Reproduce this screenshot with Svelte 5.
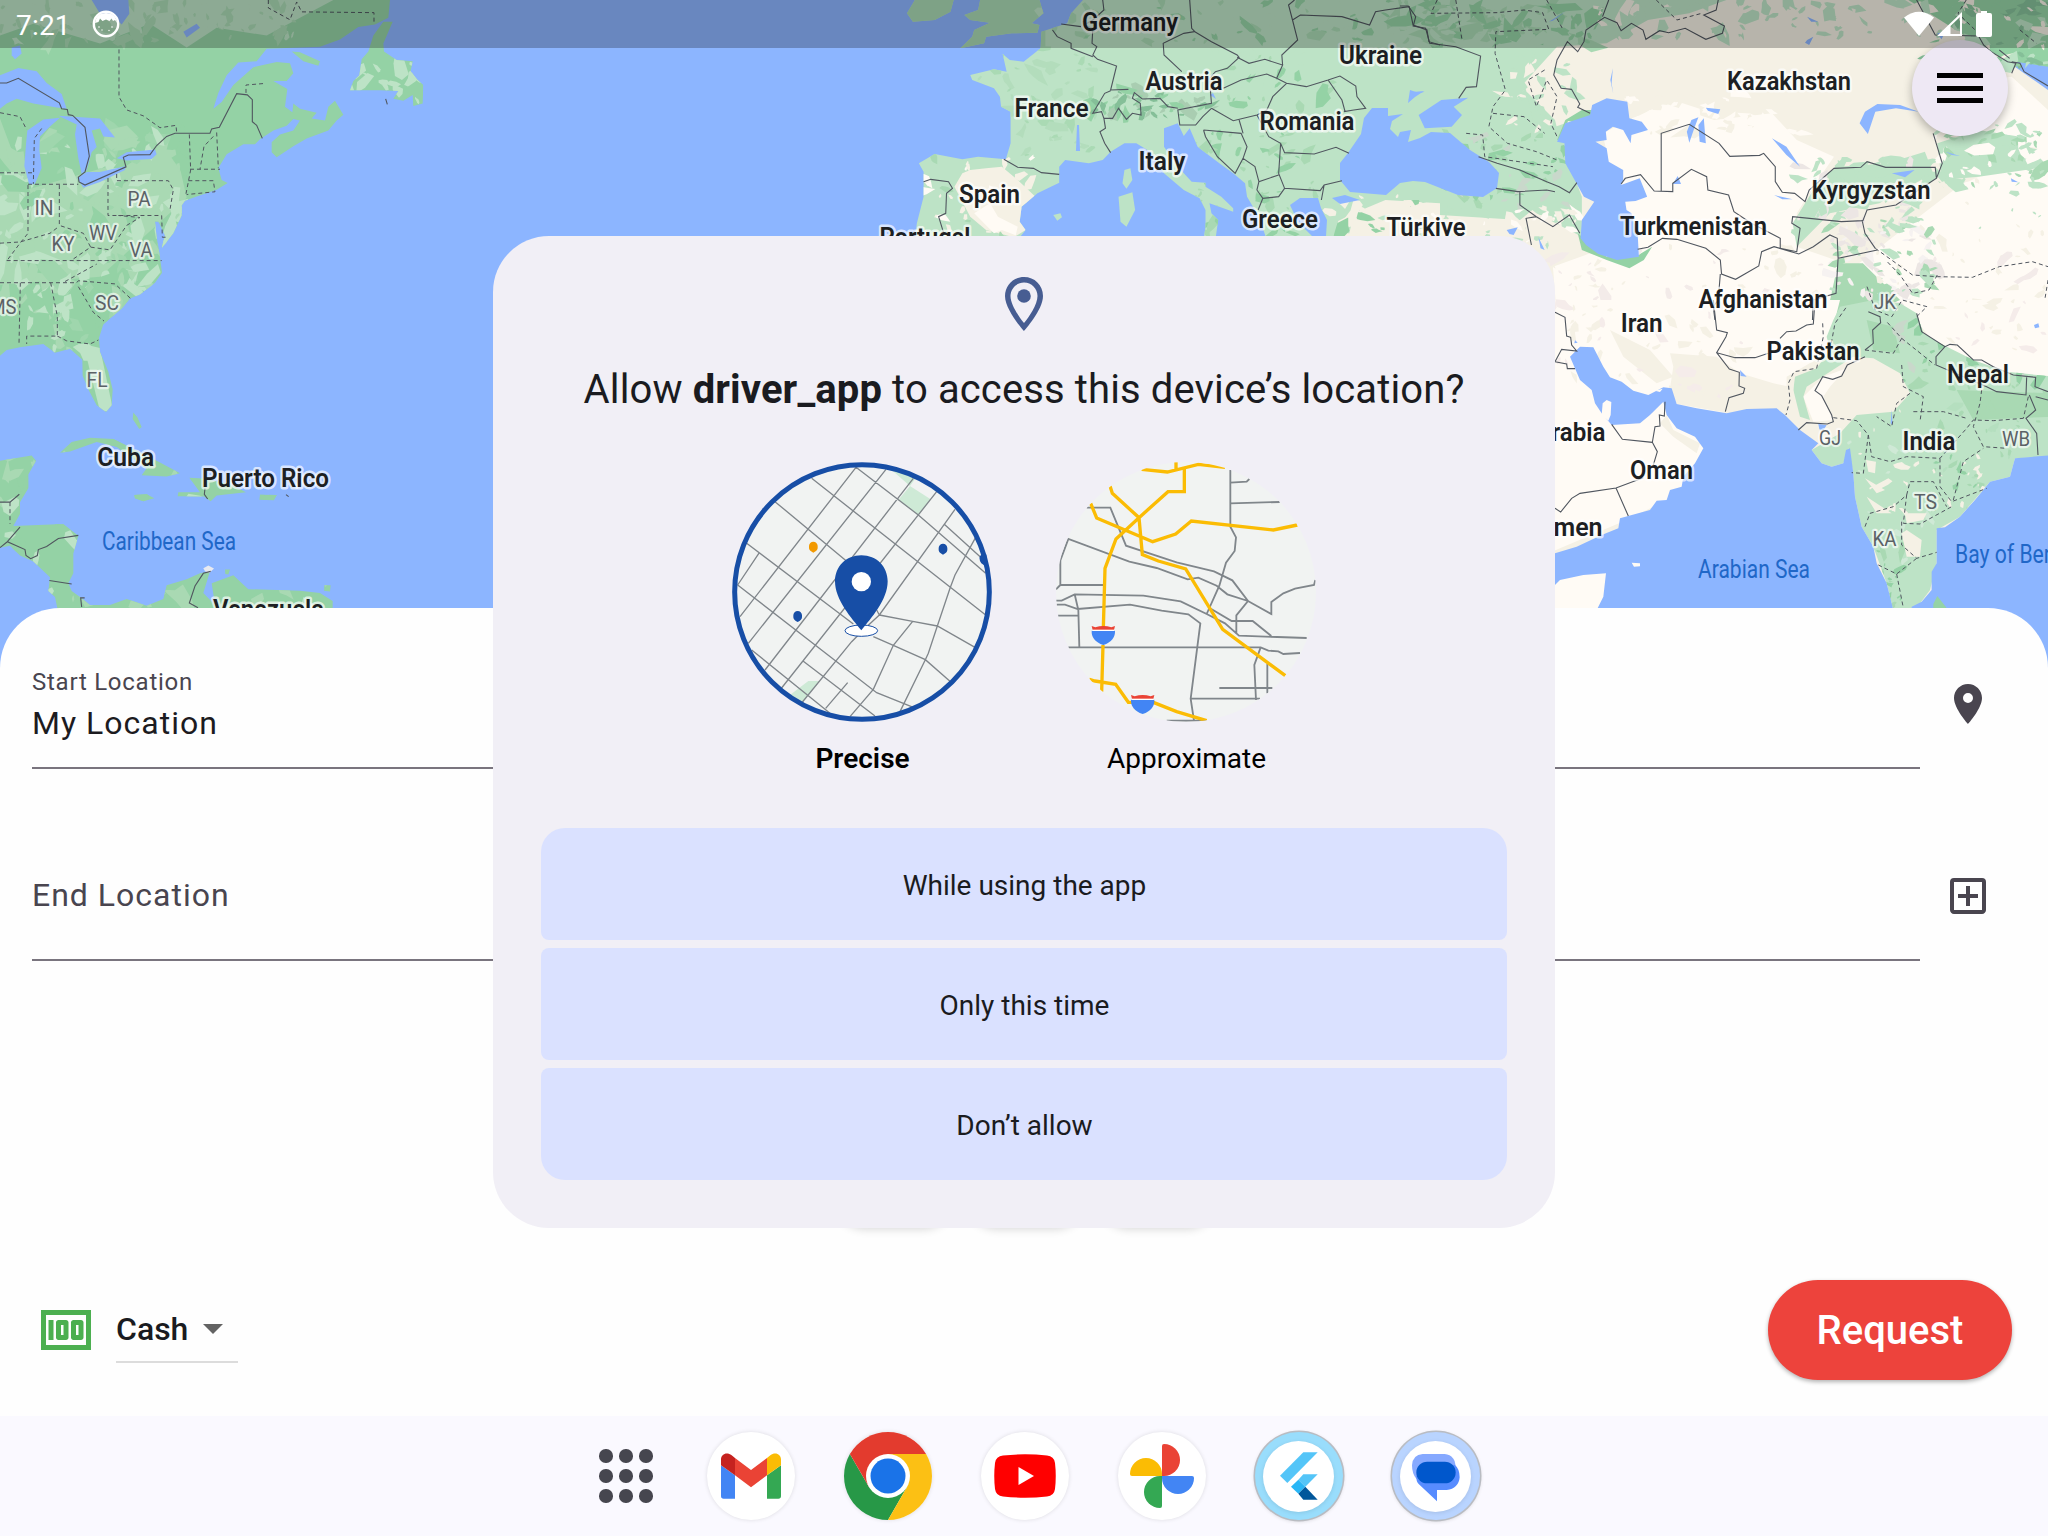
<script>
  // Deterministic terrain speckles, so the map looks the same on each load.
  function terrain(seed, x0, y0, x1, y1, count, size, colors) {
    let s = seed;
    const rnd = () => {
      s = (s * 16807) % 2147483647;
      return s / 2147483647;
    };
    const out = [];
    for (let i = 0; i < count; i++) {
      const cx = x0 + rnd() * (x1 - x0);
      const cy = y0 + rnd() * (y1 - y0);
      const r = size * (0.3 + rnd() * rnd() * 1.6);
      const tilt = rnd() * 3.14;
      const n = 5 + Math.floor(rnd() * 4);
      const pts = [];
      for (let k = 0; k < n; k++) {
        const a = (k / n) * 6.283;
        const q = r * (0.4 + rnd() * 0.8);
        const px = Math.cos(a) * q * 1.5;
        const py = Math.sin(a) * q * 0.7;
        pts.push(`${(cx + px * Math.cos(tilt) - py * Math.sin(tilt)).toFixed(1)},${(cy + px * Math.sin(tilt) + py * Math.cos(tilt)).toFixed(1)}`);
      }
      out.push({ points: pts.join(' '), fill: colors[Math.floor(rnd() * colors.length)] });
    }
    return out;
  }

  const americas = [
    '0,0 1170,0 1165,45 1125,62 1075,68 1020,100 960,118 800,123 770,155 715,158 680,190 655,235 640,275 665,258 700,215 760,170 830,157 870,160 880,185 860,205 820,205 862,225 855,270 890,292 860,318 820,330 780,352 765,365 730,365 680,390 655,425 665,455 683,463 650,480 590,497 555,508 545,520 545,545 520,590 485,628 495,595 475,560 465,560 470,600 480,650 486,690 465,715 420,745 390,755 365,780 310,820 297,855 300,890 325,940 338,985 335,1025 318,1042 290,1025 265,985 248,950 247,910 210,882 165,892 130,870 60,878 20,885 0,900',
    '1150,55 1178,55 1150,110 1152,130 1190,152 1238,155 1232,180 1250,200 1270,215 1268,262 1240,268 1238,240 1210,255 1180,250 1195,230 1140,228 1050,228 1060,205 1078,190 1085,150 1105,130 1120,90',
    '815,360 840,340 880,330 900,305 875,300 880,262 900,275 950,285 935,300 975,305 985,270 1005,255 1030,290 1010,305 985,330 920,350 880,370 830,398 815,385',
    '875,130 900,132 960,155 955,166 910,155',
    '0,1165 95,1152 108,1165 85,1200 85,1235 60,1270 60,1300 40,1330 190,1325 235,1355 220,1400 220,1450 205,1475 215,1495 240,1510 270,1530 330,1530 380,1515 440,1532 490,1515 500,1480 560,1465 600,1450 630,1445 610,1500 645,1530 635,1475 700,1455 745,1490 900,1494 960,1500 998,1520 998,1570 180,1570 165,1510 145,1495 150,1460 100,1420 60,1405 30,1380 0,1385',
    '180,1145 215,1118 270,1107 340,1110 410,1140 480,1170 540,1197 500,1205 425,1202 440,1185 350,1130 290,1118 210,1142',
    '568,1208 610,1210 690,1225 738,1245 650,1253 632,1268 612,1256 533,1255 535,1245 600,1245',
    '403,1252 440,1250 463,1260 430,1268 405,1260',
    '780,1251 830,1252 822,1265 778,1264',
    '400,1043 412,1055 425,1080 418,1085 398,1060',
    '974,1480 992,1480 990,1496 972,1494',
    '675,1440 690,1440 685,1453 676,1452'
  ];
  const lakes = [
    '0,190 55,172 110,180 140,210 185,238 200,275 170,272 100,262 50,250 20,262 0,275',
    '82,330 130,302 180,298 150,320 120,345 118,380 125,425 105,465 88,468 73,420 78,365',
    '175,293 300,300 345,348 310,345 300,325 275,330 290,372 275,385 260,430 245,440 235,400 225,340 230,315',
    '232,450 260,435 300,435 378,420 375,430 300,460 250,475',
    '350,400 380,385 465,378 470,390 455,402 380,406',
    '275,0 385,0 388,35 365,62 345,45 305,42',
    '35,120 60,115 65,135 45,150 35,140',
    '550,80 590,60 600,70 560,95'
  ];
  const americaBorders =
    'M0 210L20 210 55 198 178 260 185 275 202 277 205 290 218 292 255 322 268 395 255 435 235 448 237 460 255 468 378 422 370 398 385 392 450 391 470 368 500 345 525 337 630 337 635 326 658 322 710 237 742 240 757 252 757 308 770 317 787 350M0 1270H30L58 1250M22 1370L60 1333M0 1385L22 1370 75 1390 78 1405 92 1413 112 1405 115 1390 140 1382 175 1362 235 1354M148 1468L215 1477M245 1535L242 1512 254 1512M632 1445L610 1450 585 1482 568 1525 594 1537M615 1235L613 1250 623 1262';
  const americaStates =
    'M357 125V245L380 278 430 293 480 323 528 317 530 335M568 340L572 430 558 490M570 428H660M0 437H100M84 468V590L60 615 20 660M84 466H235M178 468V570L250 590 272 625 220 655M324 450V545H485M350 440V457H505L520 480 510 530M20 659H485M0 715H230L235 710 345 718 392 755M61 715L57 870M152 715L172 800V850H80V870M172 850L200 862 270 870 295 860M235 725L280 790 312 812M125 325L103 350 100 465M0 285L60 295 80 328M650 335L655 425M640 345L612 370 600 428M565 457H640L645 485 560 492M485 545L487 600H505M195 712L290 668M272 625L330 632 380 570 420 550 355 545M30 1270V1325M805 0V20L870 50 890 5 905 30 1122 32V58M738 235V215L795 211M0 615L60 612 150 590 178 572';

  const europe = [
    '665,0 635,40 625,70 560,95 558,145 515,185 480,180 462,162 472,215 440,208 380,225 385,240 440,265 455,290 458,320 482,335 482,430 470,478 400,470 360,478 290,462 250,490 262,515 262,590 245,670 240,720 500,720 520,690 505,665 510,620 550,580 605,548 605,500 620,480 680,490 715,480 735,455 770,430 800,430 835,455 870,520 920,570 960,595 975,630 975,680 970,720 1000,720 1007,660 990,640 985,610 1045,635 1045,625 1015,590 975,560 975,548 940,545 905,500 870,440 870,385 905,370 920,408 935,385 955,440 1010,490 1045,520 1075,550 1080,590 1110,650 1130,720 2000,720 2000,0',
    '220,40 240,0 338,0 330,35 290,60 235,65',
    '405,0 400,30 365,45 380,60 430,68 390,90 385,110 355,145 415,130 420,110 485,100 550,98 555,75 535,70 565,40 555,0',
    '770,510 785,505 790,540 775,566 765,550',
    '755,590 790,577 797,630 775,680 760,665',
    '590,645 608,640 612,652 600,662'
  ];
  const europeBorders =
    'M715 0L718 30 690 60 668 75 690 85 688 130 700 140 690 165 702 178 750 198 735 270 780 268M735 272L720 280 690 340 712 335 718 355 740 355 755 325 775 358 790 340 812 345 810 310 790 295 795 278 815 297 860 295 880 320 905 325M718 355L722 385 708 395 720 430 735 458M610 72L660 80M588 90L600 110 635 130 635 145 690 170M935 0L940 85 948 95 920 100 868 130 870 165 915 215M948 95L990 125 1055 165 1060 172 1030 205 1000 215 985 235 988 280 990 310 905 330 910 375 950 375 968 350 990 325M1055 172L1085 190 1125 178 1170 195 1155 235 1130 222 1065 240 1020 265M1170 195L1168 165 1208 120 1195 60 1185 15 1200 0M1195 60L1215 45 1320 50 1390 75 1405 35 1430 30 1490 20 1500 75 1535 90 1540 125 1568 135M1155 235L1180 250 1230 260 1285 240 1315 228 1355 258 1358 290 1380 325 1350 330 1325 335M1180 250L1145 290 1130 330 1105 345 1045 362 990 325M1285 240L1320 300 1328 335M970 390L1065 400 1080 440 1070 475 1050 520 1005 470 975 410 970 390M1060 360L1070 400M1105 345L1135 410 1165 430 1175 458 1250 462 1305 442 1338 460M1165 430L1160 520 1175 565 1265 572 1275 555 1320 542M1160 525L1110 545 1105 570 1120 595 1160 590 1175 565M1120 595L1108 630M1070 475L1100 500 1110 545M1275 555L1268 600M262 545L280 538 325 545 335 565 320 580 318 640 300 650 313 700M465 478L500 502 540 505 560 518 605 523';

  const caspian = '380,425 400,370 460,345 465,315 500,295 550,305 555,355 585,365 600,390 560,405 558,430 540,390 515,380 498,395 500,420 473,425 500,445 505,485 540,510 540,540 535,555 580,535 598,590 570,603 545,605 548,630 560,640 575,700 578,770 525,780 480,762 450,735 437,715 440,660 470,605 445,590 400,490 398,430';
  const asiaBorders =
    'M0 18H20L38 50 32 78 62 85 72 130 135 140 195 168 185 260 160 262 142 295M770 0L765 30 735 45 785 78 780 100 740 118 690 85 650 98 628 92 595 118 588 90 560 70 535 92 525 68 495 52 450 90 445 125 430 155 405 125 380 180 372 225 390 265 415 268 435 312 430 322 460 340M632 572V400L700 373 772 430 798 469 870 466 880 460 908 500 908 545 925 577 955 580 980 605 990 570 1050 505 1115 502 1130 485 1175 502 1295 502 1298 535 1200 615 1130 630 1120 662 1068 665 950 650 948 670 968 685 960 755 920 745 920 715 850 670 808 635 795 585 745 570 742 530 705 508 660 550V575L615 573 582 524 545 535 535 552M1250 0L1295 105 1400 108 1412 135 1430 155 1470 185 1490 190 1480 220M1480 185L1500 190 1510 215 1568 258M1450 150L1475 175M1290 400L1312 490 1298 535M575 748L600 742 635 715 670 718 740 745 775 780 778 822 812 838 868 798 875 755 905 740 965 762 1000 740 1040 705 1058 715 1060 775 1155 750M775 822L770 900 758 920 762 960M1060 775L1055 880 1000 900 998 960M190 470L235 490 290 510 355 545 385 560 410 578 428 548M232 565L285 575 355 570 375 575M290 575V615L330 650 370 680 410 645 435 700M330 650L305 655 318 735M1118 660L1125 700 1150 745M505 0L490 50';
  const asiaDashed =
    'M90 0L75 40 235 38 300 30 345 38 360 88 232 95 230 160 255 270 225 320 215 380 260 430 330 455 380 480M350 210L310 240 330 320 355 240 380 290 365 370 380 410M225 340L300 350 350 400M160 400L200 405 205 470 260 480 370 500M355 0L395 90M620 0L670 60 730 40M135 0L150 120M1150 745L1240 825 1300 830 1385 832 1450 800 1530 785 1568 800M1300 825L1280 870 1240 880 1210 825 1175 780M1130 860L1150 930 1190 950 1215 900 1275 920 1250 950M1568 840L1560 900M1370 0L1350 40 1400 100M1500 90L1540 130';

  const arabian = '90,170 120,140 160,142 190,200 210,232 245,245 280,272 325,285 370,262 395,265 410,312 470,325 560,340 620,327 710,325 735,345 780,390 835,430 815,450 845,490 875,500 910,490 918,450 930,445 940,520 945,590 965,680 1000,740 1010,790 1040,850 1065,950 160,950 190,890 198,820 130,825 60,840 45,855 30,855 30,765 45,760 110,740 185,705 235,685 240,655 330,630 350,602 380,600 390,570 425,560 430,530 465,490 490,445 465,410 410,385 380,345 370,305 330,345 300,370 215,375 185,340 165,310 155,270 120,240';
  const bengal = '1540,465 1425,475 1418,500 1410,530 1350,545 1305,600 1260,650 1215,682 1190,685 1190,790 1175,815 1175,870 1145,905 1115,920 1115,1140 1540,1140';
  const india = '900,20 1000,0 1080,10 1130,40 1150,100 1200,130 1300,180 1400,215 1540,230 1540,470 1425,475 1410,530 1350,545 1260,650 1190,690 1190,790 1170,870 1110,950 1065,950 1040,850 1000,740 965,680 945,590 940,520 925,445 910,490 875,500 845,490 815,450 850,430 900,400 950,345 1060,335 1110,280 1080,220 1000,175 940,170 870,215 800,260 790,290 810,360 780,350 760,270 765,230 830,205 870,150 860,110 880,60';
  const southBorders =
    'M45 37L75 52 80 108 92 112 95 135 110 153 65 148 45 185M45 185L80 192 82 206H105M520 0L530 90 562 98 558 110 530 158 585 173 645 173 685 160M530 158L568 207 598 217 597 258 614 265 610 280 567 293 556 335M720 115L740 95 768 93 800 75 820 72 825 0M215 373L247 418 337 427 352 455 340 495M337 427L345 380 360 378 358 345 373 348 375 305M45 625L62 636 95 595 120 580 228 564 310 533M228 564L265 648M775 390L800 368 862 372 880 365 875 345 845 287 825 272 848 230 878 238 905 228 922 195 975 170M975 150L1000 130 998 90 1022 68 1020 50 985 35M1130 40L1145 95 1215 140 1230 133 1252 135 1300 180 1325 180 1360 200 1420 225 1487 232 1485 260 1524 275M1215 140L1188 170V195L1340 260 1370 275 1458 285 1460 232M1468 285L1487 330 1458 355 1490 400 1494 465M1487 290L1524 300';
  const southDashed =
    'M848 70L850 110 830 205 762 215 745 250 750 300 738 345M870 150L885 70 920 20M975 150L1060 160 1085 115 1040 65M1085 115L1185 195M1085 195L1090 260 1150 290 1140 365M880 353L950 362 985 405 995 470 1050 485 1100 470 1200 475 1280 385 1300 360 1360 362 1450 355M985 405L970 520 935 518M1110 280L1070 310 1055 380 1010 350M1120 335L1210 335 1280 355M1325 270L1320 310 1300 380 1330 440 1400 445M1200 475V560L1235 605 1340 565M1240 600L1270 485 1330 445M1100 585L1110 545 1180 545 1220 620M975 680L990 640 1060 620 1100 585 1090 670 1140 672 1235 620M1085 665V735L1130 775 1190 757M1130 775L1070 822 1015 795M1070 822L1090 924M1465 290L1450 355';

  const countries = [
    ['Germany', 1130, 30.5, 96], ['Ukraine', 1380.5, 64, 83], ['Austria', 1184, 90, 77], ['France', 1051.5, 117, 74],
    ['Romania', 1307, 130, 95], ['Italy', 1162, 170, 47], ['Spain', 989.5, 203, 61], ['Greece', 1280, 228, 76],
    ['Portugal', 925, 246, 91], ['Türkiye', 1426, 236, 79], ['Kazakhstan', 1789, 90, 124], ['Kyrgyzstan', 1871, 199, 119],
    ['Turkmenistan', 1693.5, 235, 147], ['Afghanistan', 1763, 308, 129], ['Iran', 1641.7, 332, 42],
    ['Pakistan', 1813, 360, 93], ['Nepal', 1978, 383, 62], ['India', 1929, 450, 53], ['Oman', 1661.5, 479, 63],
    ['Saudi Arabia', 1537, 441, 137], ['Yemen', 1564, 536, 77], ['Cuba', 125.7, 466, 57],
    ['Puerto Rico', 265.5, 486.5, 127], ['Venezuela', 268.5, 618, 111]
  ];
  const states = [
    ['IN', 44, 215, 19], ['PA', 139, 206, 23], ['WV', 103, 240, 28], ['KY', 63, 251, 23], ['VA', 141, 257, 23],
    ['SC', 107, 309.5, 24], ['FL', 97, 386.5, 21], ['MS', 3, 314, 27], ['JK', 1885, 309, 22], ['GJ', 1830, 445, 22],
    ['WB', 2016, 446, 28], ['TS', 1925.5, 509, 23], ['KA', 1884.5, 546, 24]
  ];
  const seas = [
    ['Caribbean Sea', 169, 550, 134], ['Arabian Sea', 1754, 577.5, 112], ['Bay of Bengal', 2019.5, 562.5, 129]
  ];

  const greens = ['#bde3c6', '#bde3c6', '#a9d9b3', '#a9d9b3', '#94d2a5', '#9fd6ad'];
  const naPatches = [
    ...terrain(11, 0, 340, 560, 900, 260, 28, greens),
    ...terrain(5, 0, 0, 900, 110, 80, 20, ['#bde3c6', '#a9d9b3', '#a9d9b3']),
    ...terrain(6, 1050, 150, 1270, 265, 22, 20, ['#bde3c6']),
    ...terrain(7, 0, 1100, 1000, 1538, 120, 24, ['#a9d9b3', '#a9d9b3', '#bde3c6', '#94d2a5'])
  ];
  const euPatches = [
    ...terrain(21, 380, 140, 700, 470, 60, 18, ['#aadab4', '#b3ddbc']),
    ...terrain(22, 680, 270, 1000, 350, 55, 18, ['#94d2a5', '#a9cdb1', '#85bf98']),
    ...terrain(23, 1000, 150, 1300, 330, 30, 20, ['#94d2a5', '#a9d9b3', '#bde3c6']),
    ...terrain(24, 950, 380, 1260, 700, 60, 16, ['#94d2a5', '#a9d9b3']),
    ...terrain(25, 560, 0, 1568, 130, 70, 18, ['#94d2a5', '#a9d9b3', '#bde3c6']),
    ...terrain(26, 260, 470, 560, 720, 35, 16, ['#a9d9b3', '#f5f1e5', '#fffbf5']),
    ...terrain(27, 1270, 580, 1568, 720, 30, 18, ['#94d2a5', '#bde3c6', '#f5f1e5'])
  ];
  const asPatches = [
    ...terrain(31, 0, 0, 480, 130, 110, 24, ['#94d2a5', '#a9d9b3', '#bde3c6']),
    ...terrain(32, 480, 0, 1250, 110, 70, 20, ['#bde3c6', '#f5f1e5', '#bde3c6']),
    ...terrain(33, 1250, 0, 1568, 200, 80, 22, ['#94d2a5', '#85bf98', '#bde3c6', '#f5f1e5']),
    ...terrain(34, 250, 160, 420, 420, 35, 20, ['#f5f1e5', '#bde3c6', '#f5f1e5']),
    ...terrain(35, 100, 400, 420, 620, 60, 18, ['#94d2a5', '#a9d9b3', '#c9d8cb']),
    ...terrain(36, 520, 280, 1000, 400, 60, 18, ['#fffbf5', '#f5f1e5']),
    ...terrain(37, 1280, 370, 1568, 560, 80, 18, ['#bde3c6', '#a9d9b3', '#bde3c6', '#fffbf5']),
    ...terrain(38, 960, 480, 1290, 700, 60, 18, ['#bde3c6', '#bde3c6', '#ece6e4']),
    ...terrain(39, 1040, 640, 1300, 960, 110, 18, ['#bde3c6', '#a9d9b3', '#ece6e4', '#f6f2f1']),
    ...terrain(40, 370, 740, 1568, 960, 80, 15, ['#f5f1e5', '#f5f1e5', '#f3ebe9']),
    ...terrain(41, 0, 620, 430, 740, 60, 16, ['#f5f1e5', '#fffbf5', '#bde3c6']),
    ...terrain(42, 1250, 540, 1568, 760, 18, 12, ['#f5f1e5', '#bde3c6'])
  ];
  const indiaPatches = [
    ...terrain(51, 900, 330, 1180, 800, 36, 15, ['#f5f1e5', '#cfe9d6']),
    ...terrain(52, 1180, 250, 1540, 700, 50, 15, ['#a9d9b3', '#b5dfbf', '#a9d9b3']),
    ...terrain(53, 1180, 460, 1340, 620, 22, 12, ['#94d2a5', '#f5f1e5']),
    ...terrain(54, 1080, 60, 1540, 270, 40, 18, ['#94d2a5', '#a9d9b3', '#c9d8cb']),
    ...terrain(55, 990, 740, 1090, 930, 22, 14, ['#94d2a5', '#a9d9b3'])
  ];
  const iranPatches = [
    ...terrain(61, 45, 10, 620, 300, 60, 18, ['#f5f1e5', '#f5f1e5', '#f5ecea']),
    ...terrain(62, 1200, 0, 1540, 150, 22, 14, ['#f5f1e5', '#f5ecea'])
  ];

  const choices = ['While using the app', 'Only this time', 'Don’t allow'];
  const dots = [0, 1, 2, 3, 4, 5, 6, 7, 8];
</script>

<div class="screen">
  <svg class="map" viewBox="0 0 2048 680" width="2048" height="680">
    <defs>
      <clipPath id="na">{#each americas as p}<polygon points={p} />{/each}</clipPath>
      <clipPath id="eu">{#each europe as p}<polygon points={p} />{/each}</clipPath>
      <clipPath id="ind"><polygon points={india} /></clipPath>
    </defs>
    <rect width="2048" height="680" fill="#8cb5ff" />

    <g transform="scale(.33333 .3954)">
      <g clip-path="url(#na)">
        <rect width="1300" height="1600" fill="#94d2a5" />
        <path d="M0 0H1000L800 90 650 70 560 120 450 60 300 110 100 60 0 90Z" fill="#bde3c6" />
        <path d="M0 300L80 480 330 420 520 350 560 500 300 700 0 720Z" fill="#a9d9b3" />
        <path d="M250 870L300 880 340 1040 300 1040Z" fill="#bde3c6" />
        {#each naPatches as p}<polygon points={p.points} fill={p.fill} />{/each}
      </g>
      {#each lakes as p}<polygon points={p} fill="#8cb5ff" />{/each}
      <path d="M610 1437L625 1430 642 1438 628 1449 615 1445Z" fill="#e9eaf0" />
      <path class="border" d={americaBorders} />
      <path class="border dashed" d={americaStates} />
      <path class="border" d="M1157 250L1162 264M858 1251L866 1256" />
    </g>

    <g transform="translate(820 0) scale(.3954 .33333)">
      <g clip-path="url(#eu)">
        <rect width="2000" height="720" fill="#bde3c6" />
        <path d="M210 0H570V150H210Z" fill="#a9d9b3" />
        <path d="M380 510L420 505 460 500 500 540 545 590 510 620 520 690 490 712 420 690 380 650 340 560 360 520Z" fill="#f5f1e5" />
        <path d="M390 640L430 610 450 650 500 680 495 706 460 690 440 700Z" fill="#fffbf5" />
        <path d="M1350 640L1430 600 1568 610V720H1335Z" fill="#f5f1e5" />
        {#each euPatches as p}<polygon points={p.points} fill={p.fill} />{/each}
      </g>
    </g>

    <path d="M1500 48L1600 0H1920L2048 90V620H1440V215L1520 220 1570 180 1555 120 1525 90 1515 60Z" fill="#f5f1e5" />
    <g transform="translate(1400 0) scale(.4133 .33333)">
      <path d="M490 400L640 310 760 360 900 340 960 420 1050 470 1000 560 960 640 960 740 1100 800 1350 560 1568 430V960H380L370 800 460 760 560 800Z" fill="#fffbf5" />
      <path d="M1280 260L1480 230 1568 330V450L1330 400Z" fill="#fffbf5" />
      <path d="M0 0H790L700 40 600 60 500 130 380 140 300 250 330 400 400 370 450 340 400 460 440 590 440 710 330 640 290 600 170 600 0 600Z" fill="#bde3c6" />
      <path d="M380 420L400 360 440 330 470 330 430 400ZM430 700L500 770 570 770 610 740 590 780 555 805 500 780 440 750Z" fill="#94d2a5" />
      <path d="M1020 530L1060 500 1180 490 1270 455 1290 520 1160 610 1040 640 960 740 950 670ZM1300 430L1400 390 1500 410 1568 500 1400 530 1310 540Z" fill="#bde3c6" />
      <path d="M1060 790L1120 790 1210 900 1100 960H1030Z" fill="#a9d9b3" />
      <path d="M1230 0H1568V200L1460 180Z" fill="#94d2a5" />
      {#each asPatches as p}<polygon points={p.points} fill={p.fill} />{/each}
      <polygon points={caspian} fill="#8cb5ff" />
      <g fill="#8cb5ff">
        <path d="M45 345L100 300 165 293 130 320 150 345 125 380 60 385Z" />
        <path d="M694 395L705 360 722 352 712 385 700 428ZM722 375L735 355 740 430 725 425Z" />
        <path d="M1112 370L1125 335 1155 312 1210 315 1255 335 1200 325 1150 335 1132 402Z" />
        <path d="M740 323L775 328 770 342 745 332ZM900 415L935 440 968 500 935 465ZM1190 520L1245 510 1222 532ZM1320 455L1355 468 1335 465ZM985 120L1000 110 990 135 980 128ZM985 50L1012 65 995 65ZM1300 100L1320 95 1310 118ZM660 552L672 528 680 552ZM905 585L950 598 925 598ZM1478 535L1496 547 1480 545ZM515 205L512 250 516 282 509 240ZM258 690L285 682 275 705 265 702ZM335 712L350 750 340 745ZM20 300L35 275 60 275 40 282ZM360 65L400 35 370 62Z" />
      </g>
    </g>

    <g transform="translate(1540 300) scale(.33333)">
      <path d="M0 0H900L860 160 740 230 740 330 500 340 0 320Z" fill="#fffbf5" />
      <path d="M1080 0H1540V300L1400 240 1200 150Z" fill="#fffbf5" />
      <path d="M0 320H400L500 450 460 560 260 660 0 770V950H210L200 800 0 850Z" fill="#fffbf5" />
      <path d="M390 160L530 170 600 220 700 250 750 260 740 340 560 338 410 312 390 265 400 200ZM210 90L330 150 400 230 350 250 250 170Z" fill="#f5f1e5" />
      <path d="M380 345L400 390 480 430 470 460 400 410 360 370Z" fill="#f5f1e5" />
      <path d="M760 250H1110V340L880 420 740 350Z" fill="#f5f1e5" />
      {#each iranPatches as p}<polygon points={p.points} fill={p.fill} />{/each}
      <path d="M790 290L850 230 920 205 870 260 850 290 880 360 820 365Z" fill="#fffbf5" />
      <g clip-path="url(#ind)">
        <rect x="740" width="800" height="960" fill="#bde3c6" />
        <path d="M980 60L1060 80 1080 160 1000 150ZM1250 270L1540 280V350L1300 360Z" fill="#a9d9b3" />
        {#each indiaPatches as p}<polygon points={p.points} fill={p.fill} />{/each}
        <path d="M978 480L1008 485 1005 520 985 515ZM975 535L1035 570 1010 580ZM980 590L1055 640 1010 640ZM1095 640L1160 640 1150 660 1100 670ZM1100 690L1145 720 1140 770 1100 770 1085 700Z" fill="#f5f1e5" />
      </g>
      <polygon points={arabian} fill="#8cb5ff" />
      <polygon points={bengal} fill="#8cb5ff" />
      <path d="M835 372L860 375 850 392 838 388ZM600 210L620 230 602 228ZM1482 75L1495 70 1498 82 1485 85ZM105 120L113 128 103 130ZM1055 330L1058 375 1052 370Z" fill="#8cb5ff" />
      <path d="M188 310L200 300 214 306 212 345 205 362 185 345ZM275 788L300 790 300 799 282 800ZM345 272L368 266 360 276Z" fill="#fffbf5" />
      <path d="M1192 888L1220 924V950H1180V912Z" fill="#94d2a5" />
    </g>
    <path d="M1348 153L1340 163 1340 180 1350 192 1386 195 1400 183 1413 181 1425 182 1458 195 1483 197 1497 188 1499 173 1489 162 1470 150 1450 133 1431 132 1420 138 1408 142 1411 130 1400 132 1398 137 1390 129 1392 121 1403 114 1388 116 1388 108 1372 108 1364 118 1361 134Z" fill="#8cb5ff" />
    <path d="M1290 205L1300 198 1318 198 1321 208 1327 220 1326 236H1312L1298 222ZM1332 198L1345 195 1360 200 1340 204ZM1410 90L1416 92 1424 91 1415 97 1408 103ZM1210 95L1213 93 1216 99Z" fill="#8cb5ff" />
    <path d="M1078 125L1079 150 1077 150Z" stroke="#8cb5ff" stroke-width="2" />
    <g transform="translate(820 0) scale(.3954 .33333)"><path class="border" d={europeBorders} /></g>
    <g transform="translate(1400 0) scale(.4133 .33333)">
      <path class="border" d={asiaBorders} />
      <path class="border dashed" d={asiaDashed} />
    </g>
    <g transform="translate(1540 300) scale(.33333)">
      <path class="border" d={southBorders} />
      <path class="border dashed" d={southDashed} />
    </g>

    {#each states as [name, x, y, w]}<text class="state" {x} {y} textLength={w} lengthAdjust="spacingAndGlyphs">{name}</text>{/each}
    {#each seas as [name, x, y, w]}<text class="sea" {x} {y} textLength={w} lengthAdjust="spacingAndGlyphs">{name}</text>{/each}
    {#each countries as [name, x, y, w]}<text class="country" {x} {y} textLength={w} lengthAdjust="spacingAndGlyphs">{name}</text>{/each}
  </svg>

  <button class="menu" aria-label="Menu"><i></i><i></i><i></i></button>

  <header class="status">
    <div class="left">
      <span>7:21</span>
      <svg width="28" height="28" viewBox="0 0 28 28">
        <circle cx="14" cy="14" r="12.2" fill="none" stroke="#fff" stroke-width="2.4" />
        <path d="M3 13C4 6 8 3 14 3S24 6 25 13L23 10 21 11 19.500 8.500 17.500 11 14 9.500 10.500 11 8 8.500 6.500 12Z" fill="#fff" />
        <g fill="#fff"><circle cx="7" cy="17" r=".8" /><circle cx="20" cy="17" r=".8" /><circle cx="10" cy="20" r=".7" /><circle cx="17" cy="20.500" r=".7" /></g>
      </svg>
    </div>
    <svg width="90" height="28" viewBox="0 0 90 28" fill="#fff">
      <path d="M0 7.500Q15-4 30 7.500L15 26Z" />
      <path fill-rule="evenodd" d="M33 26L58 2V26ZM46.500 24H56V7L46.500 16Z" />
      <path d="M77 1H83V3H86Q88 3 88 5V25Q88 27 86 27H74Q72 27 72 25V5Q72 3 74 3H77Z" />
    </svg>
  </header>

  <main class="sheet">
    <div class="field">
      <div class="input filled"><small>Start Location</small><span>My Location</span></div>
      <svg width="48" height="48" viewBox="0 0 24 24" fill="#49454f">
        <path d="M12 2C8.130 2 5 5.130 5 9c0 5.250 7 13 7 13s7-7.750 7-13c0-3.870-3.130-7-7-7zm0 9.500a2.500 2.500 0 0 1 0-5 2.500 2.500 0 0 1 0 5z" />
      </svg>
    </div>
    <div class="field second">
      <div class="input"><label>End Location</label></div>
      <svg width="48" height="48" viewBox="0 0 24 24" fill="#49454f">
        <path d="M19 3H5a2 2 0 0 0-2 2v14c0 1.100.9 2 2 2h14c1.100 0 2-.9 2-2V5a2 2 0 0 0-2-2zm0 16H5V5h14v14zm-8-2h2v-4h4v-2h-4V7h-2v4H7v2h4v4z" />
      </svg>
    </div>
    <div class="chips"><i></i><i></i><i></i></div>
    <div class="actions">
      <svg width="60" height="60" viewBox="0 0 24 24" fill="#4caf50">
        <path d="M5 8h2v8H5zm7 0H9c-.55 0-1 .45-1 1v6c0 .55.45 1 1 1h3c.55 0 1-.45 1-1V9c0-.55-.45-1-1-1zm-1 6h-1v-4h1v4zm7-6h-3c-.55 0-1 .45-1 1v6c0 .55.45 1 1 1h3c.55 0 1-.45 1-1V9c0-.55-.45-1-1-1zm-1 6h-1v-4h1v4z" />
        <path d="M2 4v16h20V4H2zm2 14V6h16v12H4z" />
      </svg>
      <div class="select">
        <span>Cash</span>
        <svg width="20" height="10" viewBox="0 0 20 10"><path d="M0 0H20L10 10Z" fill="#636363" /></svg>
      </div>
      <button class="request">Request</button>
    </div>
  </main>

  <nav class="taskbar">
    <div class="apps">{#each dots as d (d)}<i></i>{/each}</div>
    <div class="app">
      <svg width="60" height="46" viewBox="0 0 180 136">
        <path d="M0 36V128Q0 136 8 136H42V66Z" fill="#4285f4" />
        <path d="M180 36V128Q180 136 172 136H138V66Z" fill="#34a853" />
        <path d="M42 66V14L90 50 138 14V66L90 102Z" fill="#ea4335" />
        <path d="M0 36V18C0 2 18-6 32 6L42 14V66Z" fill="#c5221f" />
        <path d="M180 36V18C180 2 162-6 148 6L138 14V66Z" fill="#fbbc04" />
      </svg>
    </div>
    <div class="app">
      <svg width="88" height="88" viewBox="-44 -44 88 88">
        <path d="M0 0L-38.100-22A44 44 0 0 1 38.100-22Z" fill="#e33b2e" />
        <path d="M-38.100-22A44 44 0 0 0 0 44L19 11 0 0-19 11Z" fill="#279847" />
        <path d="M38.100-22A44 44 0 0 1 0 44L19 11 0-22Z" fill="#fcc014" />
        <path d="M-38.100-22L-19 11 0 0V-22Z" fill="#e33b2e" />
        <circle r="22" fill="#fff" /><circle r="17.500" fill="#1a73e8" />
      </svg>
    </div>
    <div class="app">
      <svg width="62" height="44" viewBox="0 0 62 44">
        <path d="M9 1.500Q31-1 53 1.500Q60 2 61 9Q62.500 22 61 35Q60 42 53 42.500Q31 45 9 42.500Q2 42 1 35Q-.5 22 1 9Q2 2 9 1.500Z" fill="red" />
        <path d="M24.500 13L40 22 24.500 31Z" fill="#fff" />
      </svg>
    </div>
    <div class="app">
      <svg width="64" height="64" viewBox="-32 -32 64 64">
        <path d="M0 0V-30Q0-32 2-32A16 16 0 0 1 2 0Z" fill="#ea4335" />
        <path d="M0 0H30Q32 0 32 2A16 16 0 0 1 0 2Z" fill="#4285f4" />
        <path d="M0 0V30Q0 32-2 32A16 16 0 0 1-2 0Z" fill="#34a853" />
        <path d="M0 0H-30Q-32 0-32-2A16 16 0 0 1 0-2Z" fill="#fbbc04" />
      </svg>
    </div>
    <div class="app ringed flutter">
      <div>
        <svg width="38" height="48" viewBox="0 0 114 142">
          <path d="M70 0H113L22 92 0 70Z" fill="#54c5f8" />
          <path d="M70 66H113L76 103 55 82Z" fill="#54c5f8" />
          <path d="M33 103L55 82 76 103 55 124Z" fill="#29b6f6" />
          <path d="M55 124L76 103 113 142H70Z" fill="#01579b" />
        </svg>
      </div>
    </div>
    <div class="app ringed messages">
      <div>
        <svg width="48" height="48" viewBox="0 0 144 144">
          <path d="M32 0H98Q131 4 131 42L75 80 14 76Q0 60 0 34Q2 2 32 0Z" fill="#86a9ff" />
          <path d="M128 32Q143 44 143 70Q140 104 104 108H75V142L20 90Q12 82 13 66Z" fill="#578cff" />
          <rect x="13" y="23" width="118" height="65" rx="32.500" fill="#0057cc" />
        </svg>
      </div>
    </div>
  </nav>

  <section class="dialog">
    <svg class="pin" width="38" height="54" viewBox="0 0 38 54">
      <path fill-rule="evenodd" d="M19 0C8.500 0 0 8 0 19C0 33 19 54 19 54S38 33 38 19C38 8 29.500 0 19 0ZM19 5.500C26.500 5.500 32.500 11.500 32.500 19C32.500 27.500 24 40 19 46C14 40 5.500 27.500 5.500 19C5.500 11.500 11.500 5.500 19 5.500Z" fill="#475d92" />
      <circle cx="19" cy="19" r="6.800" fill="#475d92" />
    </svg>
    <h1>Allow <b>driver_app</b> to access this device’s location?</h1>
    <div class="options">
      <figure>
        <svg width="260" height="260" viewBox="36 36 780 780">
          <defs><clipPath id="pc"><circle cx="426" cy="426" r="385" /></clipPath></defs>
          <circle cx="426" cy="426" r="380" fill="#f1f3f2" />
          <g clip-path="url(#pc)">
            <path d="M515 60L590 80 570 108ZM570 108L632 148 595 195 535 150ZM210 735L265 693H297L245 760Z" fill="#ceead6" />
            <path class="road" d="M118 308L53 405M408 52L60 500M498 58L85 580M580 85L135 660M650 125L180 720M705 178L478 495 440 530 395 575 240 765M275 85L797 495M165 155L400 350M408 52L595 195 797 370M80 280L400 522M53 405L470 728 580 772M95 600L330 790M248 632L465 798M672 222L797 335M478 495L578 514 652 528 765 592M470 480L478 495M460 560L520 586 616 629 695 698M578 514L520 586 460 718 390 800M767 262L705 375 690 415 652 528 625 610 616 629 540 785M383 698L317 775" />
          </g>
          <circle cx="426" cy="426" r="382" fill="none" stroke="#174ea6" stroke-width="15" />
          <path d="M267 288a13 13 0 0 1 26 0v6q0 8-13 14q-13-6-13-14Z" fill="#f29900" />
          <path d="M656 294a13 13 0 0 1 26 0v6q0 8-13 14q-13-6-13-14ZM220 496a13 13 0 0 1 26 0v6q0 8-13 14q-13-6-13-14ZM779 328a13 13 0 0 1 20-14v34Q779 342 779 328Z" fill="#174ea6" />
          <ellipse cx="424" cy="542" rx="49" ry="17" fill="#fff" stroke="#174ea6" stroke-width="3" />
          <path d="M424 316C378 316 345 350 345 394C345 450 395 505 424 541C453 505 503 450 503 394C503 350 470 316 424 316Z" fill="#174ea6" />
          <circle cx="424" cy="395" r="29" fill="#fff" />
        </svg>
        <figcaption class="chosen">Precise</figcaption>
      </figure>
      <figure>
        <svg width="260" height="260" viewBox="48 36 780 780">
          <defs><clipPath id="ac"><circle cx="438" cy="426" r="390" /></clipPath></defs>
          <circle cx="438" cy="426" r="390" fill="#f1f3f2" />
          <g clip-path="url(#ac)">
            <path class="road wide" d="M571 60V230L588 262 584 303 558 338 538 407 500 492M571 98L620 95 628 87M571 160L719 156M140 173H211L258 287 410 337 522 364 577 391 624 453 589 496V552M48 418L61 405V331L85 267 268 335 350 354 443 388 475 383 530 407 562 433 624 453 694 492V456L730 430 765 416 822 405 826 390M61 405H190M48 452H65L104 433 310 437 422 454 500 492 555 520 597 557 800 564M50 464H75L113 477 270 464 365 482 445 493 481 520 452 746 462 812M52 497H115M104 433L115 480 118 592M85 592H662L685 602 715 604 730 612 780 609M510 475L575 513H638L694 558M662 592L643 645 648 750M682 642V730M538 714H697M452 746H660M380 812H500" />
            <path class="highway" d="M305 58L382 66 475 43 555 52M408 36V58M433 58V125H384L297 203 228 267 195 355 190 535M210 108L217 130 297 203 307 314 355 333 437 357 548 538 736 677M152 160L170 204 338 275 407 252 454 213 700 240 772 225M189 585L185 725M148 688L165 693 227 703 265 757H290M340 757L410 785 500 812" />
          </g>
          {#each [[190, 557], [308, 764]] as [cx, cy]}
            <g transform="translate({cx} {cy})">
              <path d="M-35-15H35Q37 15 0 28Q-37 15-35-15Z" fill="#4285f4" />
              <path d="M-35-29L-24-25-12-28 0-29 12-28 24-25 35-29 32-17H-32Z" fill="#ea4335" />
              <path d="M-33-16H33" stroke="#fff" stroke-width="4" />
            </g>
          {/each}
        </svg>
        <figcaption>Approximate</figcaption>
      </figure>
    </div>
    <div class="choices">{#each choices as c}<button>{c}</button>{/each}</div>
  </section>
</div>

<style>
  :global(body) { margin: 0; }
  .screen { position: relative; display: flex; flex-direction: column; width: 2048px; height: 1536px; overflow: hidden; background: #fefefe; font-family: Roboto, sans-serif; color: #1a1b20; }
  .screen * { box-sizing: border-box; }
  svg { display: block; flex: none; }
  button { border: 0; font: inherit; color: inherit; padding: 0; }
  .map { margin-bottom: -72px; }
  .border { fill: none; stroke: #50565f; stroke-width: 1.1; vector-effect: non-scaling-stroke; }
  .dashed { stroke-width: 1; stroke-dasharray: 4 3; }
  text { text-anchor: middle; paint-order: stroke; stroke-linejoin: round; }
  .country { font-size: 25.5px; font-weight: 600; fill: #1d1f23; stroke: rgba(255, 255, 255, .68); stroke-width: 5px; }
  .state { font-size: 20.5px; fill: #5b6166; stroke: rgba(255, 255, 255, .65); stroke-width: 4.500px; }
  .sea { font-size: 25.5px; fill: #2067c8; }
  .status { position: absolute; inset: 0 0 auto; height: 48px; display: flex; align-items: center; justify-content: space-between; padding: 0 54px 0 16px; background: rgba(0, 0, 0, .25); color: #fff; font-size: 28px; }
  .left { display: flex; align-items: center; gap: 21px; letter-spacing: .2px; padding-top: 2px; }
  .left svg { margin-top: -2px; }
  .menu { position: absolute; left: 1912px; top: 40px; width: 96px; height: 96px; border-radius: 50%; background: #eee8f4; display: flex; flex-direction: column; align-items: center; justify-content: center; gap: 7.500px; box-shadow: 0 4px 10px rgba(0, 0, 0, .28); }
  .menu i { width: 46px; height: 5px; background: #000; }
  .sheet { position: relative; height: 808px; padding: 0 36px 0 32px; border-radius: 60px 60px 0 0; background: #fefefe; display: flex; flex-direction: column; }
  .field { display: flex; justify-content: space-between; align-items: flex-start; height: 99px; margin-top: 62px; padding-right: 20px; }
  .input { width: 1888px; height: 112px; border-bottom: 2px solid #79747e; margin-top: -13px; display: flex; flex-direction: column; color: #49454f; font-size: 32px; letter-spacing: 1px; line-height: 40px; }
  .input.filled { padding-top: 5px; }
  .input small { font-size: 24px; letter-spacing: .75px; line-height: 32px; margin-top: 4px; }
  .input span { color: #1c1b1f; margin-top: 2px; line-height: 46px; }
  .field svg { margin-top: 10px; }
  .field.second { margin-top: 93px; }
  .second .input label { margin-top: 26px; }
  .chips { display: flex; gap: 16px; justify-content: center; height: 112px; margin: 154px 0 0 8px; }
  .chips i { width: 116px; height: 112px; border-radius: 28px; background: #fefefe; box-shadow: 0 2px 10px rgba(0, 0, 0, .16); }
  .actions { display: flex; align-items: center; height: 100px; margin-top: 53px; padding-left: 4px; }
  .select { display: flex; align-items: center; gap: 15px; width: 122px; height: 66px; margin: 0 0 0 20px; border-bottom: 2px solid #dcdcdc; font-size: 32px; font-weight: 500; }
  .request { width: 244px; height: 100px; margin-left: auto; border-radius: 50px; background: #ed433c; color: #fff; font-size: 40px; font-weight: 500; box-shadow: 0 2px 4px rgba(0, 0, 0, .3); }
  .taskbar { height: 120px; background: #faf9ff; display: flex; align-items: center; justify-content: center; gap: 49px; padding-left: 31px; }
  .apps { display: grid; grid-template-columns: repeat(3, 13.400px); gap: 6.600px; width: 53.400px; margin-right: 5px; }
  .apps i { height: 13.400px; border-radius: 50%; background: #46464f; }
  .app { width: 88px; height: 88px; border-radius: 50%; background: #fff; display: flex; align-items: center; justify-content: center; box-shadow: 0 0 4px rgba(0, 0, 0, .12); }
  .ringed { box-shadow: 0 0 0 1.500px #b9bcc2, 0 1px 4px rgba(0, 0, 0, .2); }
  .ringed div { width: 71px; height: 71px; border-radius: 50%; background: #fff; display: flex; align-items: center; justify-content: center; box-shadow: 0 1px 4px rgba(0, 0, 0, .1); }
  .flutter { background: #99ddfc; }
  .messages { background: #b9d4ff; }
  .messages svg { margin-top: 3px; }
  .dialog { position: absolute; left: 493px; top: 236px; width: 1062px; height: 992px; padding: 41px 48px 48px; border-radius: 56px; background: #f1eff6; display: flex; flex-direction: column; align-items: center; }
  h1 { margin: 35px 0 0; font-size: 40px; line-height: 48px; font-weight: 400; letter-spacing: .12px; white-space: nowrap; }
  h1 b { font-weight: 700; }
  .options { display: flex; gap: 64px; margin-top: 48px; color: #000; }
  figure { margin: 0; display: flex; flex-direction: column; align-items: center; }
  figcaption { margin-top: 20px; padding-left: 1px; font-size: 28px; line-height: 34px; }
  .chosen { font-weight: 600; }
  .road { fill: none; stroke: #80868b; stroke-width: 4; }
  .road.wide { stroke-width: 5.500; }
  .highway { fill: none; stroke: #fbbc04; stroke-width: 10; }
  .choices { display: flex; flex-direction: column; gap: 8px; width: 966px; margin-top: auto; }
  .choices button { height: 112px; padding: 2px 0 0 1px; border-radius: 8px; background: #dae1ff; font-size: 28px; }
  .choices button:first-child { border-radius: 24px 24px 8px 8px; }
  .choices button:last-child { border-radius: 8px 8px 24px 24px; }
</style>
